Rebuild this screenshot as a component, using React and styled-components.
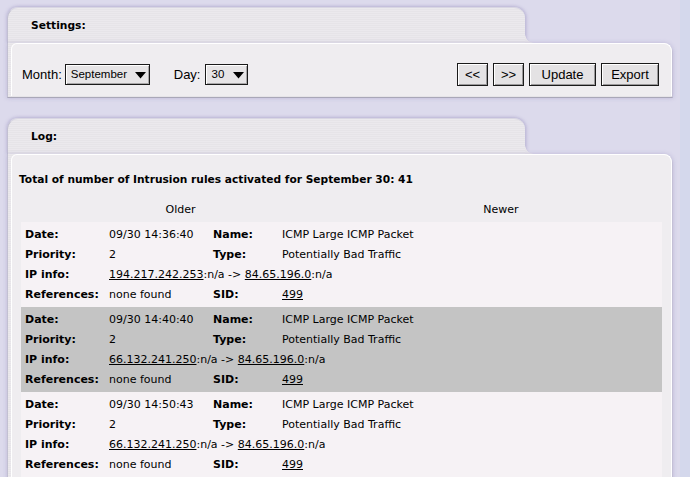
import React from "react";
import styled, { createGlobalStyle } from "styled-components";

const Global = createGlobalStyle`
  html, body { margin: 0; padding: 0; }
  body {
    background: #d4d8ec;
    font-family: "DejaVu Sans", Verdana, sans-serif;
    font-size: 11px;
    color: #000;
  }
`;

const Page = styled.div`
  width: 680px;
  height: 477px;
  box-sizing: border-box;
  background: #dcdaec;
  padding: 7px 7px 0 7px;
  display: flex;
  flex-direction: column;
  gap: 20px;
  overflow: hidden;
`;

const Panel = styled.section`
  display: flex;
  flex-direction: column;
  width: 666px;
`;

const tabBg = `repeating-linear-gradient(180deg, #ebe9ed 0px, #ebe9ed 1px, #e6e4e8 1px, #e6e4e8 2px)`;

const Tab = styled.div`
  position: relative;
  width: 518px;
  height: ${(p) => p.$h}px;
  box-sizing: border-box;
  background: ${tabBg};
  border-left: 1px solid #c2c0d2;
  border-top: 1px solid #d8d6e2;
  border-radius: 11px 11px 0 0;
  box-shadow: -1px -1px 3px rgba(150, 140, 190, 0.35), 2px 0 3px rgba(150, 140, 190, 0.35);
  display: flex;
  align-items: center;
  padding: 0 0 0 23px;
  font-weight: bold;
  font-size: 10.7px;
  z-index: 1;
  &::after {
    content: "";
    position: absolute;
    right: -9px;
    bottom: 0;
    width: 9px;
    height: 9px;
    background: radial-gradient(circle at 100% 0, transparent 8.5px, #e8e6ea 9px);
  }
`;

const Frame = styled.div`
  background: ${tabBg};
  border-left: 1px solid #c2c0d2;
  border-right: 1px solid #c4c0d6;
  border-bottom: 1px solid #a9a7b8;
  border-top-right-radius: 9px;
  padding: 0 0 1px 3px;
  box-shadow: 0 0 4px rgba(150, 140, 190, 0.45);
  position: relative;
  z-index: 2;
  flex: ${(p) => (p.$grow ? 1 : "none")};
`;

const Inner = styled.div`
  background: #efedf0;
  border-top: 1px solid #ffffff;
  border-left: 1px solid #ffffff;
  border-right: 1px solid #ffffff;
  border-radius: 6px 8px 0 0;
  box-sizing: border-box;
  min-height: ${(p) => p.$minh || 0}px;
`;

const SettingsRow = styled.div`
  display: flex;
  align-items: center;
  padding: 19px 12px 10px 10px;
  font-family: "Liberation Sans", Arial, sans-serif;
  font-size: 13px;
`;

const Label = styled.span`
  margin-right: ${(p) => p.$mr || 3}px;
`;

const SelectBox = styled.div`
  display: flex;
  align-items: center;
  justify-content: space-between;
  width: ${(p) => p.$w}px;
  height: 21px;
  box-sizing: border-box;
  border: 1px solid #1a1a1a;
  background: #e6e4e6;
  box-shadow: inset 1px 1px #ffffff, inset -1px -1px #a8a6a8;
  padding: 0 3px 2px 5px;
  font-size: 11.5px;
  margin-right: ${(p) => p.$mr || 0}px;
`;

const Arrow = styled.svg`
  width: 11px;
  height: 7px;
  margin-top: 3px;
`;

const Spacer = styled.div`
  flex: 1;
`;

const Button = styled.button`
  height: 23px;
  box-sizing: border-box;
  border: 1px solid #1a1a1a;
  background: #e4e2e4;
  box-shadow: inset 1px 1px #ffffff, inset -1px -1px #9a989a;
  font-family: "Liberation Sans", Arial, sans-serif;
  font-size: 13px;
  color: #000;
  padding: 0;
  width: ${(p) => p.$w}px;
  margin-left: 5px;
  border-radius: 0;
`;

const LogBody = styled.div`
  padding: 18px 9px 0 6px;
`;

const Title = styled.div`
  font-weight: bold;
  font-size: 10.65px;
  line-height: 14px;
  padding-left: 1px;
`;

const Table = styled.div`
  margin: 12px 0 0 3px;
  display: flex;
  flex-direction: column;
`;

const HeadRow = styled.div`
  display: grid;
  grid-template-columns: 319px 1fr;
  height: 20px;
  align-items: center;
  margin-bottom: 3px;
`;

const HeadCell = styled.div`
  text-align: center;
`;

const Record = styled.div`
  background: ${(p) => (p.$alt ? "#c4c4c4" : "#f6f2f5")};
  padding: 2px 4px 3px 4px;
  display: grid;
  grid-template-columns: 84px 104px 69px 1fr;
  grid-auto-rows: 20px;
  align-items: center;
`;

const Key = styled.span`
  font-weight: bold;
`;

const Val = styled.span`
  white-space: nowrap;
`;

const Wide = styled.span`
  grid-column: 2 / span 3;
  white-space: nowrap;
`;

const Link = styled.a`
  color: #000;
  text-decoration: underline;
`;

const records = [
  { date: "09/30 14:36:40", src: "194.217.242.253", dst: "84.65.196.0" },
  { date: "09/30 14:40:40", src: "66.132.241.250", dst: "84.65.196.0" },
  { date: "09/30 14:50:43", src: "66.132.241.250", dst: "84.65.196.0" },
];

const DownArrow = () => (
  <Arrow viewBox="0 0 11 7">
    <path d="M0 0 H11 L5.5 6.5 Z" fill="#000" />
  </Arrow>
);

export default function App() {
  return (
    <>
      <Global />
      <Page>
        <Panel>
          <Tab $h={36}>Settings:</Tab>
          <Frame>
            <Inner>
              <SettingsRow>
                <Label>Month:</Label>
                <SelectBox $w={85} $mr={24}>
                  <span>September</span>
                  <DownArrow />
                </SelectBox>
                <Label $mr={5}>Day:</Label>
                <SelectBox $w={43}>
                  <span>30</span>
                  <DownArrow />
                </SelectBox>
                <Spacer />
                <Button $w={31}>&lt;&lt;</Button>
                <Button $w={31}>&gt;&gt;</Button>
                <Button $w={67}>Update</Button>
                <Button $w={58}>Export</Button>
              </SettingsRow>
            </Inner>
          </Frame>
        </Panel>
        <Panel>
          <Tab $h={36}>Log:</Tab>
          <Frame $grow>
            <Inner $minh={400}>
              <LogBody>
                <Title>Total of number of Intrusion rules activated for September 30: 41</Title>
                <Table>
                  <HeadRow>
                    <HeadCell>Older</HeadCell>
                    <HeadCell>Newer</HeadCell>
                  </HeadRow>
                  {records.map((r, i) => (
                    <Record key={i} $alt={i % 2 === 1}>
                      <Key>Date:</Key>
                      <Val>{r.date}</Val>
                      <Key>Name:</Key>
                      <Val>ICMP Large ICMP Packet</Val>
                      <Key>Priority:</Key>
                      <Val>2</Val>
                      <Key>Type:</Key>
                      <Val>Potentially Bad Traffic</Val>
                      <Key>IP info:</Key>
                      <Wide>
                        <Link>{r.src}</Link>:n/a -&gt; <Link>{r.dst}</Link>:n/a
                      </Wide>
                      <Key>References:</Key>
                      <Val>none found</Val>
                      <Key>SID:</Key>
                      <Val>
                        <Link>499</Link>
                      </Val>
                    </Record>
                  ))}
                </Table>
              </LogBody>
            </Inner>
          </Frame>
        </Panel>
      </Page>
    </>
  );
}
